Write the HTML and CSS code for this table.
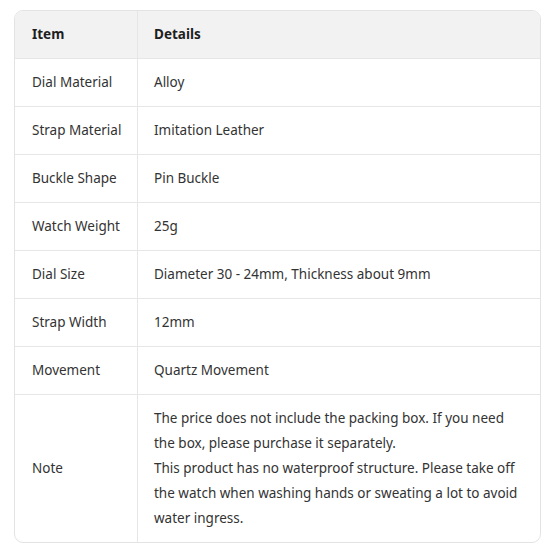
FILE: index.html
```html
<!DOCTYPE html>
<html lang="en">
<head>
<meta charset="utf-8">
<link rel="stylesheet" href="styles.css">
</head>
<body>
<div class="card">
  <table class="spec">
    <colgroup><col class="c1"><col></colgroup>
    <thead>
      <tr><th>Item</th><th>Details</th></tr>
    </thead>
    <tbody>
      <tr><td>Dial Material</td><td>Alloy</td></tr>
      <tr><td>Strap Material</td><td>Imitation Leather</td></tr>
      <tr><td>Buckle Shape</td><td>Pin Buckle</td></tr>
      <tr><td>Watch Weight</td><td>25g</td></tr>
      <tr><td>Dial Size</td><td>Diameter 30 - 24mm, Thickness about 9mm</td></tr>
      <tr><td>Strap Width</td><td>12mm</td></tr>
      <tr><td>Movement</td><td>Quartz Movement</td></tr>
      <tr class="last"><td>Note</td><td>The price does not include the packing box. If you need the box, please purchase it separately.<br>This product has no waterproof structure. Please take off the watch when washing hands or sweating a lot to avoid water ingress.</td></tr>
    </tbody>
  </table>
</div>
</body>
</html>
```
FILE: styles.css
```css
html, body { margin: 0; padding: 0; background: #fff; }
body {
  padding: 10px 14px;
  font-family: "Noto Sans", "Open Sans", sans-serif;
  font-size: 13.5px;
  color: #333;
}
.card {
  border: 1px solid #e3e3e3;
  border-radius: 9px;
  overflow: hidden;
}
.spec {
  width: 100%;
  table-layout: fixed;
  border-collapse: separate;
  border-spacing: 0;
}
.spec .c1 { width: 123px; }
.spec th, .spec td {
  text-align: left;
  vertical-align: middle;
  padding: 11px 16px;
  line-height: 25px;
  border-bottom: 1px solid #e6e6e6;
}
.spec th { background: #f2f2f2; font-weight: 700; color: #1e1e1e; }
.spec th:first-child, .spec td:first-child {
  padding-left: 17px;
  white-space: nowrap;
  border-right: 1px solid #e6e6e6;
}
.spec tr.last td { border-bottom: none; }
```
